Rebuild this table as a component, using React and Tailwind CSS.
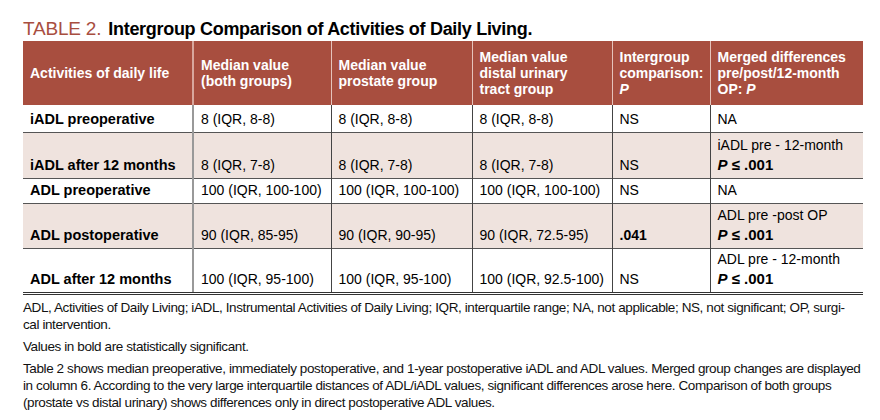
const rows = [
  {
    label: "iADL preoperative",
    both: "8 (IQR, 8-8)",
    prostate: "8 (IQR, 8-8)",
    distal: "8 (IQR, 8-8)",
    p: "NS",
    merged: ["NA"],
    h: "h-[27px]",
    shaded: false,
  },
  {
    label: "iADL after 12 months",
    both: "8 (IQR, 7-8)",
    prostate: "8 (IQR, 7-8)",
    distal: "8 (IQR, 7-8)",
    p: "NS",
    merged: ["iADL pre - 12-month", "sig"],
    h: "h-[46px]",
    shaded: true,
  },
  {
    label: "ADL preoperative",
    both: "100 (IQR, 100-100)",
    prostate: "100 (IQR, 100-100)",
    distal: "100 (IQR, 100-100)",
    p: "NS",
    merged: ["NA"],
    h: "h-[25px]",
    shaded: false,
  },
  {
    label: "ADL postoperative",
    both: "90 (IQR, 85-95)",
    prostate: "90 (IQR, 90-95)",
    distal: "90 (IQR, 72.5-95)",
    p: ".041",
    bold: true,
    merged: ["ADL pre -post OP", "sig"],
    h: "h-[45px]",
    shaded: true,
  },
  {
    label: "ADL after 12 months",
    both: "100 (IQR, 95-100)",
    prostate: "100 (IQR, 95-100)",
    distal: "100 (IQR, 92.5-100)",
    p: "NS",
    merged: ["ADL pre - 12-month", "sig"],
    h: "h-[44px]",
    shaded: false,
  },
];

function Sig() {
  return (
    <span className="font-bold text-[15px]">
      <i>P</i> ≤ .001
    </span>
  );
}

export default function App() {
  return (
    <div className="w-[880px] h-[420px] bg-white px-[23px] pt-[15px] font-['Liberation_Sans',Arial,sans-serif] text-black">
      <h1 className="flex items-baseline gap-[7px] h-[26px]">
        <span className="text-[19px] text-[#a84e3f] tracking-[-0.2px]">TABLE 2.</span>
        <span className="text-[18px] font-bold tracking-[-0.3px]">
          Intergroup Comparison of Activities of Daily Living.
        </span>
      </h1>

      <table className="w-[840px] border-collapse table-fixed">
        <colgroup>
          <col className="w-[170px]" />
          <col className="w-[138px]" />
          <col className="w-[141px]" />
          <col className="w-[140px]" />
          <col className="w-[98px]" />
          <col className="w-[153px]" />
        </colgroup>
        <thead>
          <tr className="h-[64px] bg-[#a84e3f] text-white text-[14px] font-bold leading-[16px] text-left">
            <th className="px-[7px] align-middle">Activities of daily life</th>
            <th className="px-[7px] align-middle border-l-2 border-[#d8a79d]">
              Median value<br />(both groups)
            </th>
            <th className="px-[7px] align-middle border-l border-[#e6c3bb]">
              Median value<br />prostate group
            </th>
            <th className="px-[7px] align-middle border-l border-[#e6c3bb]">
              Median value<br />distal urinary<br />tract group
            </th>
            <th className="px-[7px] align-middle border-l border-[#e6c3bb]">
              Intergroup<br />comparison:<br /><i>P</i>
            </th>
            <th className="px-[7px] align-middle border-l border-[#e6c3bb]">
              Merged differences<br />pre/post/12-month<br />OP: <i>P</i>
            </th>
          </tr>
        </thead>
        <tbody className="text-[14px] leading-[20px]">
          {rows.map((r, i) => (
            <tr
              key={r.label}
              className={`${r.h} ${r.shaded ? "bg-[#efe3de]" : "bg-white"} ${
                i === rows.length - 1
                  ? "border-b-[3px] border-double border-[#333]"
                  : "border-b border-[#555]"
              }`}
            >
              <td className="px-[7px] pb-[3px] align-bottom font-bold text-[14.5px]">{r.label}</td>
              <td className="px-[7px] pb-[3px] align-bottom border-l-2 border-[#999]">{r.both}</td>
              <td className="px-[7px] pb-[3px] align-bottom border-l border-[#444]">{r.prostate}</td>
              <td className="px-[7px] pb-[3px] align-bottom border-l border-[#444]">{r.distal}</td>
              <td className={`px-[7px] pb-[3px] align-bottom border-l border-[#444] ${r.bold ? "font-bold" : ""}`}>
                {r.p}
              </td>
              <td className="px-[7px] pb-[3px] align-bottom border-l border-[#444]">
                {r.merged.map((m, j) =>
                  m === "sig" ? (
                    <div key={j}>
                      <Sig />
                    </div>
                  ) : (
                    <div key={j}>{m}</div>
                  )
                )}
              </td>
            </tr>
          ))}
        </tbody>
      </table>

      <div className="pt-[4px] text-[13.5px] leading-[17px] tracking-[-0.4px] text-[#111] flex flex-col gap-[5px] whitespace-nowrap">
        <p>
          ADL, Activities of Daily Living; iADL, Instrumental Activities of Daily Living; IQR, interquartile range; NA, not applicable; NS, not significant; OP, surgi-
          <br />
          cal intervention.
        </p>
        <p>Values in bold are statistically significant.</p>
        <p>
          Table 2 shows median preoperative, immediately postoperative, and 1-year postoperative iADL and ADL values. Merged group changes are displayed
          <br />
          in column 6. According to the very large interquartile distances of ADL/iADL values, significant differences arose here. Comparison of both groups
          <br />
          (prostate vs distal urinary) shows differences only in direct postoperative ADL values.
        </p>
      </div>
    </div>
  );
}
